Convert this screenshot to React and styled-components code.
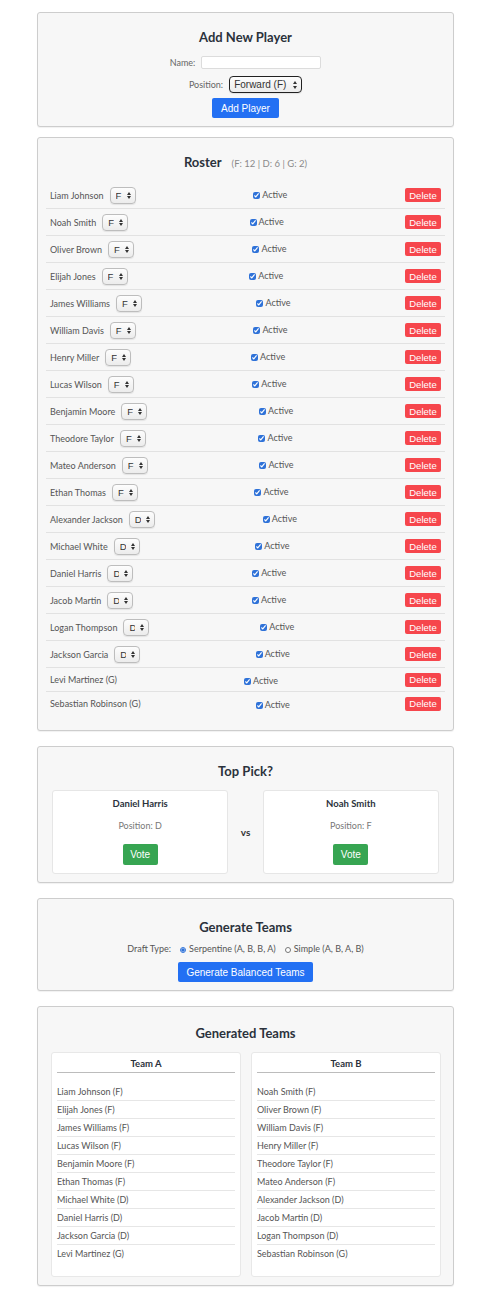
import React from "react";
import styled, { createGlobalStyle } from "styled-components";

const GlobalStyle = createGlobalStyle`
  body {
    margin: 0;
    background: #ffffff;
    font-family: Lato, "Noto Sans", sans-serif;
    color: #444;
  }
`;

const Page = styled.div`
  width: 417px;
  margin-left: 37px;
  padding-top: 12px;
`;

const Panel = styled.section`
  background: #f7f7f7;
  border: 1px solid #cdcdcd;
  border-radius: 3px;
  padding: 14px 8px 8px;
  margin-bottom: ${(p) => (p.$tight ? "10px" : "15px")};
  box-shadow: 0 1px 1px rgba(0, 0, 0, 0.06);
`;

const Title = styled.h2`
  margin: ${(p) => p.$before || 0}px 0 ${(p) => p.$after || 8}px;
  font-size: 13px;
  line-height: 20px;
  font-weight: 700;
  color: #2b323c;
  text-align: center;
  display: flex;
  justify-content: center;
  align-items: baseline;
  gap: 10px;
`;

const Counts = styled.span`
  font-size: 9.5px;
  font-weight: 400;
  color: #8a8a8a;
`;

const FormRow = styled.div`
  display: flex;
  justify-content: center;
  align-items: center;
  gap: 6px;
  margin-bottom: ${(p) => p.$after || 0}px;
`;

const Label = styled.label`
  font-size: 9px;
  color: #666;
`;

const TextInput = styled.input`
  width: 120px;
  height: 13px;
  box-sizing: border-box;
  border: 1px solid #dcdcdc;
  border-radius: 2px;
  background: #fff;
  padding: 0 3px;
  outline: none;
`;

const SelectWrap = styled.span`
  position: relative;
  display: inline-flex;

  &::before,
  &::after {
    content: "";
    position: absolute;
    right: 5px;
    border-left: 2.5px solid transparent;
    border-right: 2.5px solid transparent;
    pointer-events: none;
  }
  &::before {
    top: 5px;
    border-bottom: 3px solid #333;
  }
  &::after {
    top: 9.5px;
    border-top: 3px solid #333;
  }
`;

const Select = styled.select`
  appearance: none;
  -webkit-appearance: none;
  height: 17px;
  box-sizing: border-box;
  border: 1px solid ${(p) => (p.$big ? "#222" : "#bdbdbd")};
  border-radius: 4px;
  background: linear-gradient(#fdfdfd, #ececec);
  box-shadow: 0 1px 1px rgba(0, 0, 0, 0.08);
  font-family: "Liberation Sans", Arial, sans-serif;
  font-size: ${(p) => (p.$big ? "10px" : "9.5px")};
  color: #333;
  padding: 0 ${(p) => (p.$big ? 12 : 13)}px 0 ${(p) => (p.$big ? 4 : 5)}px;
  width: ${(p) => p.$w}px;
  outline: none;
`;

const Button = styled.button`
  border: none;
  border-radius: 2px;
  color: #fff;
  font-family: "Liberation Sans", Arial, sans-serif;
  background: ${(p) => p.$bg};
  font-size: ${(p) => p.$fs || 10}px;
  height: ${(p) => p.$h || 20}px;
  width: ${(p) => p.$w}px;
  padding: 0;
  cursor: pointer;
`;

const ButtonRow = styled.div`
  display: flex;
  justify-content: center;
`;

const RosterList = styled.div`
  margin-bottom: 7px;
`;

const PlayerRow = styled.div`
  display: flex;
  justify-content: space-between;
  align-items: center;
  height: ${(p) => (p.$short ? 23 : 26)}px;
  padding: 0 4px;
  border-bottom: 1px solid #e2e2e2;

  &:last-child {
    border-bottom: none;
  }
`;

const NameCell = styled.div`
  display: flex;
  align-items: center;
  gap: 6px;
  font-size: 9px;
  color: #555;
`;

const ActiveLabel = styled.label`
  display: flex;
  align-items: center;
  gap: 2px;
  font-size: 9px;
  color: #555;
  margin-top: ${(p) => (p.$short ? 1 : -2)}px;
`;

const Check = styled.input`
  width: 7px;
  height: 7px;
  margin: 3px 0 0;
  accent-color: #2f72d8;
`;

const MatchUp = styled.div`
  display: flex;
  justify-content: space-around;
  align-items: center;
`;

const PickCard = styled.div`
  width: 44%;
  height: 84px;
  box-sizing: border-box;
  background: #fff;
  border: 1px solid #e6e6e6;
  border-radius: 3px;
  padding-top: 6px;
  display: flex;
  flex-direction: column;
  align-items: center;
`;

const PickName = styled.div`
  font-size: 9.5px;
  font-weight: 700;
  color: #2b323c;
  line-height: 14px;
  margin-bottom: 8px;
`;

const PickPos = styled.div`
  font-size: 9px;
  color: #777;
  line-height: 14px;
  margin-bottom: 11px;
`;

const Versus = styled.div`
  font-size: 10px;
  font-weight: 700;
  color: #333;
`;

const RadioGroup = styled.div`
  display: flex;
  align-items: center;
  gap: 6px;
  font-size: 9px;
  color: #555;
`;

const RadioLabel = styled.label`
  display: flex;
  align-items: center;
  gap: 3px;
  margin-left: 3px;
`;

const Radio = styled.input`
  width: 6px;
  height: 6px;
  margin: 3px 0 0;
  accent-color: #2f72d8;
`;

const TeamsGrid = styled.div`
  display: grid;
  grid-template-columns: 1fr 1fr;
  gap: 10px;
  padding: 0 4px 0 5px;
`;

const TeamCard = styled.div`
  background: #fff;
  border: 1px solid #e8e8e8;
  border-radius: 3px;
  padding: 4px 5px 14px;
`;

const TeamTitle = styled.h3`
  margin: 0 0 10px;
  font-size: 9.5px;
  font-weight: 700;
  color: #2b323c;
  text-align: center;
  line-height: 14px;
  padding-bottom: 1px;
  border-bottom: 1px solid #bcbcbc;
`;

const TeamList = styled.ul`
  list-style: none;
  margin: 0;
  padding: 0;
`;

const TeamItem = styled.li`
  font-size: 9px;
  color: #555;
  height: 17px;
  line-height: 17px;
  border-bottom: 1px solid #e6e6e6;

  &:last-child {
    border-bottom: none;
  }
`;

const roster = [
  ["Liam Johnson", "F"],
  ["Noah Smith", "F"],
  ["Oliver Brown", "F"],
  ["Elijah Jones", "F"],
  ["James Williams", "F"],
  ["William Davis", "F"],
  ["Henry Miller", "F"],
  ["Lucas Wilson", "F"],
  ["Benjamin Moore", "F"],
  ["Theodore Taylor", "F"],
  ["Mateo Anderson", "F"],
  ["Ethan Thomas", "F"],
  ["Alexander Jackson", "D"],
  ["Michael White", "D"],
  ["Daniel Harris", "D"],
  ["Jacob Martin", "D"],
  ["Logan Thompson", "D"],
  ["Jackson Garcia", "D"],
  ["Levi Martinez", "G"],
  ["Sebastian Robinson", "G"],
];

const teamA = [
  "Liam Johnson (F)",
  "Elijah Jones (F)",
  "James Williams (F)",
  "Lucas Wilson (F)",
  "Benjamin Moore (F)",
  "Ethan Thomas (F)",
  "Michael White (D)",
  "Daniel Harris (D)",
  "Jackson Garcia (D)",
  "Levi Martinez (G)",
];

const teamB = [
  "Noah Smith (F)",
  "Oliver Brown (F)",
  "William Davis (F)",
  "Henry Miller (F)",
  "Theodore Taylor (F)",
  "Mateo Anderson (F)",
  "Alexander Jackson (D)",
  "Jacob Martin (D)",
  "Logan Thompson (D)",
  "Sebastian Robinson (G)",
];

const Candidate = ({ name, pos }) => (
  <PickCard>
    <PickName>{name}</PickName>
    <PickPos>Position: {pos}</PickPos>
    <Button $bg="#37a552" $w={35} $h={21}>Vote</Button>
  </PickCard>
);

const Team = ({ title, players }) => (
  <TeamCard>
    <TeamTitle>{title}</TeamTitle>
    <TeamList>
      {players.map((p) => (
        <TeamItem key={p}>{p}</TeamItem>
      ))}
    </TeamList>
  </TeamCard>
);

export default function App() {
  return (
    <Page>
      <GlobalStyle />

      <Panel $tight>
        <Title $after={9}>Add New Player</Title>
        <FormRow $after={7}>
          <Label>Name:</Label>
          <TextInput />
        </FormRow>
        <FormRow $after={5}>
          <Label>Position:</Label>
          <SelectWrap>
            <Select $big $w={73} defaultValue="F">
              <option value="F">Forward (F)</option>
              <option value="D">Defense (D)</option>
              <option value="G">Goalie (G)</option>
            </Select>
          </SelectWrap>
        </FormRow>
        <ButtonRow>
          <Button $bg="#2370f3" $w={67}>Add Player</Button>
        </ButtonRow>
      </Panel>

      <Panel>
        <Title $after={8}>
          Roster <Counts>(F: 12 | D: 6 | G: 2)</Counts>
        </Title>
        <RosterList>
          {roster.map(([name, pos]) => {
            const goalie = pos === "G";
            return (
              <PlayerRow key={name} $short={goalie}>
                <NameCell>
                  {goalie ? `${name} (G)` : name}
                  {!goalie && (
                    <SelectWrap>
                      <Select $w={26} defaultValue={pos}>
                        <option value="F">F</option>
                        <option value="D">D</option>
                      </Select>
                    </SelectWrap>
                  )}
                </NameCell>
                <ActiveLabel $short={goalie}>
                  <Check type="checkbox" defaultChecked />
                  Active
                </ActiveLabel>
                <Button $bg="#f6464c" $w={36} $h={14} $fs={9.5}>Delete</Button>
              </PlayerRow>
            );
          })}
        </RosterList>
      </Panel>

      <Panel>
        <Title $after={9}>Top Pick?</Title>
        <MatchUp>
          <Candidate name="Daniel Harris" pos="D" />
          <Versus>vs</Versus>
          <Candidate name="Noah Smith" pos="F" />
        </MatchUp>
      </Panel>

      <Panel>
        <Title $before={4} $after={6}>Generate Teams</Title>
        <FormRow $after={8}>
          <RadioGroup>
            Draft Type:
            <RadioLabel>
              <Radio type="radio" name="draft" defaultChecked />
              Serpentine (A, B, B, A)
            </RadioLabel>
            <RadioLabel>
              <Radio type="radio" name="draft" />
              Simple (A, B, A, B)
            </RadioLabel>
          </RadioGroup>
        </FormRow>
        <ButtonRow>
          <Button $bg="#2370f3" $w={135}>Generate Balanced Teams</Button>
        </ButtonRow>
      </Panel>

      <Panel>
        <Title $before={2} $after={9}>Generated Teams</Title>
        <TeamsGrid>
          <Team title="Team A" players={teamA} />
          <Team title="Team B" players={teamB} />
        </TeamsGrid>
      </Panel>
    </Page>
  );
}
